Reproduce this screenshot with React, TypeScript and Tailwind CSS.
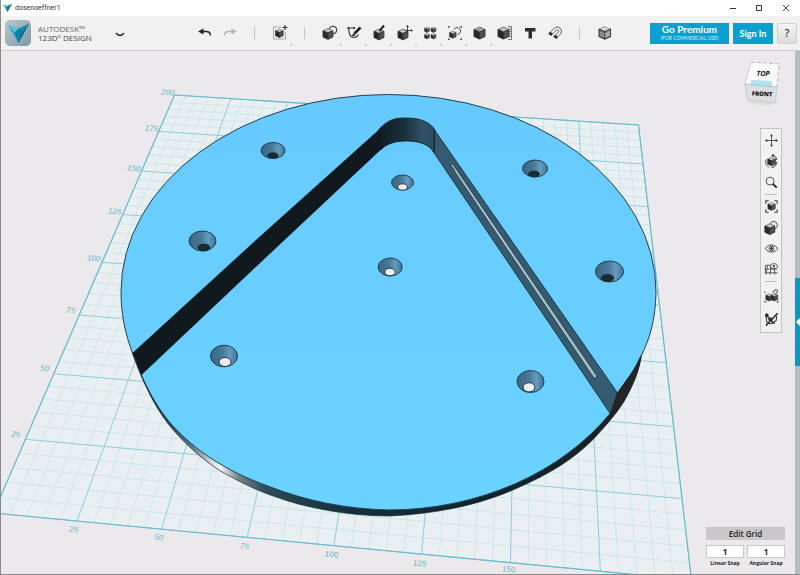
import { useState } from 'react';
import type { ReactNode } from 'react';
import clsx from 'clsx';

type Point = [number, number];

// Screen corners of the 200 x 200 mm work plane: front left, front right, back right, back left
const CORNERS: Point[] = [[-7, 513], [691, 580], [638, 125], [174, 95]];
const GRID_SIZE = 200;

function makeProjection([p0, p1, p2, p3]: Point[]) {
  const dx1 = p1[0] - p2[0], dy1 = p1[1] - p2[1];
  const dx2 = p3[0] - p2[0], dy2 = p3[1] - p2[1];
  const sx = p0[0] - p1[0] + p2[0] - p3[0];
  const sy = p0[1] - p1[1] + p2[1] - p3[1];
  const den = dx1 * dy2 - dx2 * dy1;
  const g = (sx * dy2 - dx2 * sy) / den;
  const h = (dx1 * sy - sx * dy1) / den;
  return (x: number, y: number): Point => {
    const u = x / GRID_SIZE, v = y / GRID_SIZE;
    const w = g * u + h * v + 1;
    return [
      ((p1[0] - p0[0] + g * p1[0]) * u + (p3[0] - p0[0] + h * p3[0]) * v + p0[0]) / w,
      ((p1[1] - p0[1] + g * p1[1]) * u + (p3[1] - p0[1] + h * p3[1]) * v + p0[1]) / w,
    ];
  };
}

const project = makeProjection(CORNERS);

function gridPath(isMajor: boolean) {
  let d = '';
  for (let i = 0; i <= GRID_SIZE; i += 5) {
    if ((i % 25 === 0) !== isMajor) continue;
    d += `M${project(i, 0).join(' ')}L${project(i, GRID_SIZE).join(' ')}`;
    d += `M${project(0, i).join(' ')}L${project(GRID_SIZE, i).join(' ')}`;
  }
  return d;
}

const AXIS_LABELS = [
  { text: '200', x: 167, y: 95, italic: true },
  { text: '175', x: 151, y: 131, italic: true },
  { text: '150', x: 133, y: 171, italic: true },
  { text: '125', x: 114, y: 214, italic: true },
  { text: '100', x: 93, y: 261, italic: true },
  { text: '75', x: 70, y: 313, italic: true },
  { text: '50', x: 44, y: 371, italic: true },
  { text: '25', x: 15, y: 437, italic: true },
  { text: '25', x: 73, y: 532, italic: true },
  { text: '50', x: 158, y: 540, italic: true },
  { text: '75', x: 244, y: 549, italic: true },
  { text: '100', x: 331, y: 557, italic: false },
  { text: '125', x: 419, y: 566, italic: false },
  { text: '150', x: 508, y: 572, italic: false },
];

const HOLES = [
  { x: 272.5, y: 150.5, rx: 12, ry: 8, ix: 272.5, iy: 155.5, through: false },
  { x: 534.5, y: 168.5, rx: 12.5, ry: 8.5, ix: 533.5, iy: 174, through: false },
  { x: 402, y: 182.5, rx: 11, ry: 7.5, ix: 402, iy: 187, through: true },
  { x: 202, y: 241, rx: 13.5, ry: 10, ix: 203.5, iy: 247.5, through: false },
  { x: 389.7, y: 267, rx: 12, ry: 9, ix: 389.5, iy: 272, through: true },
  { x: 609, y: 271.5, rx: 14, ry: 10.5, ix: 607, iy: 278, through: false },
  { x: 223.5, y: 356, rx: 13.5, ry: 10.8, ix: 224.5, iy: 362, through: true },
  { x: 530, y: 381.5, rx: 13.5, ry: 11, ix: 528.5, iy: 387.3, through: true },
];

function Scene() {
  return (
    <svg className="absolute inset-0 h-full w-full" viewBox="0 51 800 523" preserveAspectRatio="xMidYMid slice">
      <defs>
        <linearGradient id="rim" gradientUnits="userSpaceOnUse" x1="135" y1="0" x2="650" y2="0">
          <stop offset="0" stopColor="#0e1a21" />
          <stop offset="0.06" stopColor="#24424f" />
          <stop offset="0.11" stopColor="#5c7480" />
          <stop offset="0.145" stopColor="#c9d2d6" />
          <stop offset="0.165" stopColor="#f4f7f8" />
          <stop offset="0.2" stopColor="#71858f" />
          <stop offset="0.25" stopColor="#2f4c5b" />
          <stop offset="0.4" stopColor="#15303e" />
          <stop offset="0.7" stopColor="#0e242f" />
          <stop offset="1" stopColor="#221f22" />
        </linearGradient>
        <linearGradient id="bend">
          <stop offset="0" stopColor="#101d24" />
          <stop offset="0.45" stopColor="#1b303d" />
          <stop offset="0.75" stopColor="#2f5166" />
          <stop offset="1" stopColor="#2c4c5f" />
        </linearGradient>
        <linearGradient id="cone">
          <stop offset="0" stopColor="#3a6683" />
          <stop offset="0.45" stopColor="#487998" />
          <stop offset="0.72" stopColor="#649bbf" />
          <stop offset="1" stopColor="#427292" />
        </linearGradient>
        <linearGradient id="face" x1="0" y1="0" x2="0" y2="1">
          <stop offset="0" stopColor="#67caff" />
          <stop offset="1" stopColor="#6bd3ff" />
        </linearGradient>
      </defs>

      {/* Work plane */}
      <path d={`M${CORNERS.map((c) => c.join(' ')).join('L')}Z`} fill="#eaf0f1" />
      <path d={gridPath(false)} stroke="#c3e4e8" strokeWidth="0.8" fill="none" />
      <path d={gridPath(true)} stroke="#83c8d7" strokeWidth="0.9" fill="none" />
      <path d={`M${CORNERS.map((c) => c.join(' ')).join('L')}Z`} stroke="#67bbcd" strokeWidth="1.1" fill="none" />
      {AXIS_LABELS.map((l) => (
        <text
          key={`${l.text}-${l.x}`}
          x={l.x}
          y={l.y}
          textAnchor="middle"
          fill="#62b6c9"
          transform={`rotate(5 ${l.x} ${l.y})`}
          className={clsx("font-['Liberation_Sans'] text-[8px]", l.italic && 'italic')}
        >
          {l.text}
        </text>
      ))}

      {/* Disc: rim first, top face over it */}
      <path
        d="M132 353C139 374 151 402 167 423C182 442 201 459 220 471C243 484 256 490 270 495C306 509 352 516 389 516C430 514 472 507 510 491C550 474 573 459 593 439C604 427 616 414 623 402C632 386 639 371 642 350L560 300L200 300Z"
        fill="url(#rim)"
        stroke="#17242b"
        strokeWidth="0.7"
      />
      <path
        d="M120.500 292A267.500 197.500 0 0 1 388 94.500A267.500 197.500 0 0 1 655.500 292C655 318 650 338 640 357C634 371 626 380 617 393L610 413A267.500 218 0 0 1 388 510C346 509 306 501 270 487C242 477 222 467 200 451C186 440 175 430 165 417C155 404 147 389 141 375L132 353C124 332 120.500 312 120.500 292Z"
        fill="url(#face)"
        stroke="#23404f"
        strokeWidth="1"
      />

      {/* Groove */}
      <path d="M132 353L250 245L378 130L384 125L384 146L380 150L250 272L141 375Z" fill="#0f191e" />
      <path d="M380 128C390 118 398 118 406 118C420 118 430 122 435 131L434 153C429 145 420 141 406 141C394 141 386 144 380 150Z" fill="url(#bend)" />
      <path d="M434 130L617 393L610 414L433 152Z" fill="#355b71" stroke="#1b303c" strokeWidth="0.9" />
      <path d="M378 130C388 118 397 118 406 118C420 118 430 122 435 131M380 150C386 144 394 141 406 141C420 141 429 145 433 152M380 128V149M434 131V153" fill="none" stroke="#0f1b22" strokeWidth="0.8" />
      <path d="M450.500 165.500L452 163.500L596.500 376L594.500 379Z" fill="#9db4c0" stroke="#1b3340" strokeWidth="0.8" />
      <path d="M455 171L594 377" stroke="#c7d4da" strokeWidth="0.9" />
      <path d="M617 393L610 414L623 402C632 386 639 371 640 357C634 371 626 380 617 393Z" fill="#262426" stroke="#101a20" strokeWidth="0.6" />

      {/* Countersunk holes */}
      {HOLES.map((h) => (
        <g key={h.x}>
          <ellipse cx={h.x} cy={h.y} rx={h.rx} ry={h.ry} fill="url(#cone)" stroke="#1b3645" strokeWidth="0.9" />
          <ellipse
            cx={h.ix}
            cy={h.iy}
            rx={h.rx * 0.44}
            ry={h.ry * (h.through ? 0.42 : 0.34)}
            fill={h.through ? '#eceef0' : '#1b2930'}
            stroke="#172933"
            strokeWidth="0.9"
          />
        </g>
      ))}
    </svg>
  );
}

function Cube({ x = 0, y = 0, s = 1, light = false }: { x?: number; y?: number; s?: number; light?: boolean }) {
  return (
    <g transform={`translate(${x} ${y}) scale(${s})`} strokeLinejoin="round">
      <path d="M0 2.500L5.500 0L11 2.500L5.500 5Z" fill={light ? '#d6d6d6' : '#c4c4c4'} stroke={light ? '#8a8a8a' : '#4a4a4a'} strokeWidth="0.7" />
      <path d="M0 2.500L5.500 5V12L0 9.500Z" fill={light ? '#777' : '#262626'} />
      <path d="M11 2.500L5.500 5V12L11 9.500Z" fill={light ? '#999' : '#505050'} />
    </g>
  );
}

function Icon({ children, dim }: { children: ReactNode; dim?: boolean }) {
  return (
    <svg viewBox="0 0 18 18" className={clsx('h-[18px] w-[18px]', dim && 'opacity-30')} fill="none" stroke="#333" strokeWidth="1">
      {children}
    </svg>
  );
}

const TOOLS: { name: string; icon?: ReactNode; dim?: boolean; menu?: boolean }[] = [
  {
    name: 'Undo',
    icon: <><path d="M6 7.500H10C13 7.500 14.500 8.500 14.500 11.500" strokeWidth="1.400" stroke="#222" /><path d="M2 7.500L7.500 4.500V10.500Z" fill="#222" stroke="none" /></>,
  },
  {
    name: 'Redo',
    dim: true,
    icon: <><path d="M12 7.500H8C5 7.500 3.500 8.500 3.500 11.500" strokeWidth="1.400" /><path d="M16 7.500L10.500 4.500V10.500Z" fill="#333" stroke="none" /></>,
  },
  { name: '' },
  {
    name: 'Transform',
    menu: true,
    icon: <><path d="M10 3H2.500V15H14.500V8" stroke="#888" strokeWidth="0.700" /><Cube x={4.500} y={5} s={0.700} /><path d="M14 1V6M11.500 3.500H16.500" strokeWidth="1.200" /></>,
  },
  { name: '' },
  { name: 'Primitives', menu: true, icon: <><circle cx="12" cy="6" r="3.800" strokeWidth="0.800" /><Cube x={2} y={4.500} s={0.900} /><path d="M8.500 4.500A3.800 3.800 0 1 1 12 9.800" strokeWidth="0.800" /></> },
  {
    name: 'Sketch',
    menu: true,
    icon: <><path d="M8 4H2.500L3.500 10C5 14.500 10 14.500 12.500 10.500" strokeWidth="1.100" /><path d="M8.500 9.500L14.500 3.500" stroke="#222" strokeWidth="2.600" /><path d="M6.500 12L7.500 9.500L9 11Z" fill="#222" /><path d="M1.500 3H3.500V5H1.500ZM7.500 3H9V5H7.500Z" fill="#333" stroke="none" /></>,
  },
  { name: 'Construct', menu: true, icon: <><Cube x={3} y={5} s={0.900} /><path d="M8.500 7L13 1.500" stroke="#222" strokeWidth="2" /></> },
  { name: 'Modify', menu: true, icon: <><Cube x={2} y={5} s={0.900} /><path d="M9 6.500H16M11.500 1.500V9M10.500 3L11.500 1.500L12.500 3M15 5.500L16.500 6.500L15 7.500" strokeWidth="0.900" /></> },
  {
    name: 'Pattern',
    menu: true,
    icon: <><Cube x={3.500} y={3} s={0.450} /><Cube x={10} y={3} s={0.450} /><Cube x={3.500} y={9.500} s={0.450} /><Cube x={10} y={9.500} s={0.450} /></>,
  },
  {
    name: 'Grouping',
    menu: true,
    icon: <><path d="M2.500 4V2.500H4M14 2.500H15.500V4M15.500 14V15.500H14M4 15.500H2.500V14" stroke="#444" strokeWidth="0.900" /><Cube x={3.500} y={7} s={0.600} /><path d="M8 5.500A3.500 3.500 0 1 1 11.500 10.500" strokeWidth="0.900" /></>,
  },
  { name: 'Combine', menu: true, icon: <><Cube x={3} y={3} /><path d="M5.500 6.500L10.500 4.300M8.500 8L14 5.500" stroke="#444" strokeWidth="0.700" /></> },
  { name: 'Measure', icon: <><Cube x={2} y={3} /><path d="M12 2.500H15.500V15.500H12M13 5H15M13 7.500H15M13 10H15M13 12.500H15" stroke="#555" strokeWidth="0.800" /></> },
  { name: 'Text', icon: <path d="M4 4H14.500V7.500H11V14.500H7.500V7.500H4Z" fill="#2d2d2d" stroke="none" /> },
  {
    name: 'Snap',
    icon: (
      <>
        <path d="M3 9.500L8.500 4A4.300 4.300 0 0 1 14.600 10L10 14.500L8 12.500L12.500 8A1.500 1.500 0 0 0 10.500 6L5 11.500Z" stroke="#555" strokeWidth="0.900" />
        <path d="M3 9.500L5 11.500L6.500 10L4.500 8ZM8 12.500L10 14.500L11.500 13L9.500 11Z" fill="#222" stroke="#222" strokeWidth="0.600" />
      </>
    ),
  },
  { name: '' },
  { name: 'Material', icon: <><Cube x={3} y={2.500} s={1.050} light /><path d="M3.500 8L9 10.500L14.500 8M3.500 10.500L9 13L14.500 10.500" stroke="#ddd" strokeWidth="0.500" /></> },
];

const NAV_GROUPS: { name: string; icon: ReactNode }[][] = [
  [
    { name: 'Pan', icon: <><path d="M9 3V15M3 9H15" strokeWidth="0.900" /><path d="M9 2L7.500 4.500H10.500ZM9 16L7.500 13.500H10.500ZM2 9L4.500 7.500V10.500ZM16 9L13.500 7.500V10.500Z" fill="#333" stroke="none" /></> },
    { name: 'Orbit', icon: <><Cube x={5} y={4.500} s={0.750} /><path d="M10 2.500C13 3 14.500 5 14.500 7.500M3.500 7C2 10 3.500 13 6 15M14.500 9.500C14.500 13 12 15 9 15.500" strokeWidth="1" /><path d="M11.500 1L8.500 2.500L11.500 4.500Z" fill="#333" stroke="none" /></> },
    { name: 'Zoom', icon: <><circle cx="7.500" cy="7.500" r="4.200" strokeWidth="0.900" /><path d="M10.500 10.500L14.500 14.500" stroke="#222" strokeWidth="2" /></> },
  ],
  [
    { name: 'Fit', icon: <><path d="M3 6V3H6M12 3H15V6M15 12V15H12M6 15H3V12" strokeWidth="1.100" /><Cube x={5.200} y={4.700} s={0.700} /></> },
    { name: 'Visual style', icon: <><Cube x={2} y={5} s={0.950} /><path d="M7.500 5A4 4 0 1 1 12 10.500" strokeWidth="0.900" /></> },
    { name: 'Show or hide', icon: <><path d="M2.500 9C5.500 4 12.500 4 15.500 9C12.500 14 5.500 14 2.500 9Z" strokeWidth="0.900" /><circle cx="9" cy="9" r="2.400" /><circle cx="9" cy="9" r="1" fill="#333" /></> },
    { name: 'Grid visibility', icon: <><path d="M2.500 4.500H8M2.500 8.500H15M2.500 12.500H15.500M5 4.500L3 14.500M8.500 6L7.500 14.500M12 8L12.500 14.500M2.500 4.500V13" strokeWidth="0.800" /><ellipse cx="11.500" cy="5.500" rx="4" ry="2.700" strokeWidth="0.800" /><circle cx="11.500" cy="5.500" r="0.800" fill="#333" /></> },
  ],
  [
    { name: 'Snap when grouping', icon: <><Cube x={3} y={7} s={0.650} /><Cube x={8.500} y={7} s={0.650} /><path d="M2 5V6.500M2 14.500V16H3.500M16 14.500V16H14.500" /><path d="M10 6L12.500 3.500A1.500 1.500 0 0 1 15 5.500L12.500 8" stroke="#555" strokeWidth="1.100" /></> },
    { name: 'Sketch visibility', icon: <><path d="M3 4L4 12C7 14.500 11 13.500 14 10L14.500 5" strokeWidth="1.100" /><path d="M5 6L12 13.500M15.500 2.500L3 15.500" stroke="#222" strokeWidth="1.500" /><path d="M6 10L9 7" strokeWidth="2.200" /><circle cx="4" cy="4.500" r="1.500" fill="#222" /></> },
  ],
];

function Logo({ className }: { className: string }) {
  return (
    <svg viewBox="0 0 22 20" className={className}>
      <path d="M0 1L11 5L11 20Z" fill="#1ba3c9" />
      <path d="M22 0L11 5L11 20Z" fill="#0b5f84" />
      <path d="M0 1L11 5L7 9Z" fill="#50c8e2" />
      <path d="M22 0L11 5L15 9Z" fill="#128bb4" />
      <path d="M7 9L11 5L15 9L11 20Z" fill="#0f7fa8" />
    </svg>
  );
}

function TitleBar() {
  return (
    <header className="flex h-4 items-center bg-white pl-[2px] text-[#333]">
      <Logo className="h-2 w-[9px]" />
      <h1 className="ml-[3px] flex-1 font-['Roboto',sans-serif] text-[7px] leading-none">dosenoeffner1</h1>
      <button aria-label="Minimize" className="flex w-[27px] justify-center">
        <svg viewBox="0 0 8 8" className="h-2 w-2"><path d="M1 4.500H7" stroke="#333" /></svg>
      </button>
      <button aria-label="Maximize" className="flex w-[26px] justify-center">
        <svg viewBox="0 0 8 8" className="h-2 w-2"><path d="M1.500 1.500H6.500V6.500H1.500Z" fill="none" stroke="#333" /></svg>
      </button>
      <button aria-label="Close" className="flex w-[28px] justify-center">
        <svg viewBox="0 0 8 8" className="h-2 w-2"><path d="M1 1L7 7M7 1L1 7" stroke="#333" strokeWidth="0.9" /></svg>
      </button>
    </header>
  );
}

function Toolbar() {
  return (
    <div className="flex h-[35px] items-center border-b border-[#cfcdce] bg-[#f2f1f2]">
      <div className="flex w-[191px] shrink-0 items-center pl-[4px]">
        <div className="flex h-[26px] w-[26px] items-center justify-center rounded-[5px] bg-linear-to-br from-[#b9c7cc] to-[#7f9ba6]">
          <Logo className="h-[19px] w-[21px]" />
        </div>
        <div className="ml-[7px] w-[60px] text-[8px] whitespace-nowrap text-[#666]">
          <div className="h-[9px] leading-[9px]">AUTODESK™</div>
          <div className="h-[9px] leading-[9px] font-medium text-[#444]">123D° DESIGN</div>
        </div>
        <button aria-label="Main menu" className="ml-[17px]">
          <svg viewBox="0 0 10 6" className="mt-1 h-[6px] w-[10px]"><path d="M1 1L3.500 3.200H6.500L9 1" fill="none" stroke="#222" strokeWidth="1.500" /></svg>
        </button>
      </div>
      <div className="flex">
        {TOOLS.map((tool, i) =>
          tool.name ? (
            <button key={tool.name} aria-label={tool.name} className="relative flex h-[34px] w-[25px] items-center justify-center">
              <Icon dim={tool.dim}>{tool.icon}</Icon>
              {tool.menu && <span className="absolute right-0 bottom-[4px] h-[2px] w-[2px] rounded-full bg-[#c4c4c4]" />}
            </button>
          ) : (
            <div key={i} className="flex h-[34px] w-[25px] items-center justify-center">
              <div className="h-3 w-px bg-[#c4c4c4]" />
            </div>
          ),
        )}
      </div>
      <div className="ml-auto flex gap-1 pr-[3px]">
        <button className="flex h-[21px] w-[79px] flex-col items-center justify-center bg-[#0a9fce] font-['Lato',sans-serif] text-[10px] leading-[11px] font-bold text-white">
          Go Premium
          <span className="text-[5px] leading-[7px] font-normal whitespace-nowrap text-[#d5f1f9]">(FOR COMMERCIAL USE)</span>
        </button>
        <button className="h-[21px] w-[40px] bg-[#0a9fce] font-['Lato',sans-serif] text-[9px] leading-[21px] font-bold whitespace-nowrap text-white">Sign In</button>
        <button className="h-[21px] w-5 rounded-xs border border-[#d0d0d0] bg-linear-to-b from-[#f6f6f6] to-[#dcdcdc] text-[10px] leading-none font-semibold text-[#333]">?</button>
      </div>
    </div>
  );
}

function ViewCube() {
  return (
    <svg viewBox="0 0 40 48" className="absolute top-[8px] right-[17px] h-[48px] w-[40px]">
      <ellipse cx="20" cy="42" rx="15" ry="4" fill="#dddbdc" />
      <path d="M8 3L36 5L34 28L2 25Z" fill="#fafafa" />
      <path d="M2 25L34 28L32 44L4 41Z" fill="#dedddf" />
      <path d="M8 21L29 22L29 29L8 27Z" fill="#b6e4ee" />
      <path d="M8 3L36 5L34 28" fill="none" stroke="#a9a9ab" strokeWidth="0.8" strokeDasharray="4 2" />
      <path d="M8 3L2 25L4 41L32 44L34 28" fill="none" stroke="#c4c4c6" strokeWidth="0.8" />
      <path d="M2 25L34 28" stroke="#a5bcc2" strokeWidth="0.8" />
      <text x="20" y="17" textAnchor="middle" fill="#111" transform="rotate(2 20 17)" className="text-[7px] font-bold italic">TOP</text>
      <text x="19" y="37" textAnchor="middle" fill="#111" transform="rotate(3 19 37)" className="text-[6px] font-extrabold">FRONT</text>
    </svg>
  );
}

function NavBar() {
  return (
    <nav className="absolute top-[77px] right-[18px] w-[22px] border border-[#c3c2c4] bg-[#f3f2f3] py-px">
      {NAV_GROUPS.map((group, i) => (
        <div key={i}>
          {i > 0 && <div className="mx-[4px] my-px h-px bg-[#bcbcbc]" />}
          {group.map((item) => (
            <button
              key={item.name}
              aria-label={item.name}
              className={clsx('flex w-full items-center justify-center', i === 2 ? 'h-[24px]' : 'h-[21px]')}
            >
              <svg viewBox="0 0 18 18" className="h-[17px] w-[17px]" fill="none" stroke="#333">{item.icon}</svg>
            </button>
          ))}
        </div>
      ))}
    </nav>
  );
}

function SnapSettings() {
  const [linear, setLinear] = useState('1');
  const [angular, setAngular] = useState('1');
  const inputClass = 'h-[13px] w-full border border-[#c9c9c9] bg-white text-center text-[8px] font-bold text-[#222] outline-none';

  return (
    <div className="absolute right-[15px] bottom-[6px] w-[79px] text-[#222]">
      <button className="h-[13px] w-full bg-[#c9c7c9] text-[8px] leading-[13px] font-semibold">Edit Grid</button>
      <div className="mt-[2px] grid grid-cols-2 gap-[3px]">
        <label className="flex flex-col items-center text-[5px] leading-[10px] font-bold whitespace-nowrap">
          <input value={linear} onChange={(e) => setLinear(e.target.value)} className={inputClass} />
          Linear Snap
        </label>
        <label className="flex flex-col items-center text-[5px] leading-[10px] font-bold whitespace-nowrap">
          <input value={angular} onChange={(e) => setAngular(e.target.value)} className={inputClass} />
          Angular Snap
        </label>
      </div>
    </div>
  );
}

export default function App() {
  return (
    <div className="flex h-screen flex-col overflow-hidden border-b border-l border-[#8a8a8a] bg-[#ebe9eb] font-['Open_Sans','Noto_Sans',sans-serif]">
      <TitleBar />
      <Toolbar />
      <main className="relative flex-1 overflow-hidden">
        <Scene />
        <ViewCube />
        <NavBar />
        <SnapSettings />
        <div className="absolute inset-y-0 right-0 w-[5px] bg-[#b9bcbe]">
          <button aria-label="Open parts panel" className="absolute top-[227px] right-0 flex h-[88px] w-[5px] items-center bg-[#1296bd]">
            <svg viewBox="0 0 5 8" className="h-2 w-[5px]"><path d="M5 0L1 4L5 8Z" fill="#fff" /></svg>
          </button>
        </div>
      </main>
    </div>
  );
}
